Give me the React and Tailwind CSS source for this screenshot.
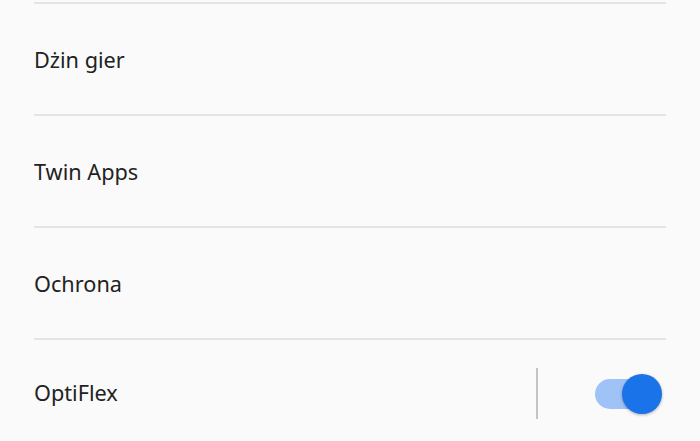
export default function App() {
  const rows = ["Dżin gier", "Twin Apps", "Ochrona"];
  return (
    <div className="w-[700px] h-[441px] overflow-hidden bg-[#fafafa] pt-[2px]" style={{ fontFamily: '"Noto Sans", "Open Sans", sans-serif' }}>
      {rows.map((r) => (
        <div key={r}>
          <div className="mx-[34px] h-[2px] bg-[#e4e4e4]" />
          <div className="h-[110px] flex items-center px-[34px] pt-[2px] text-[21.7px] text-[#222222]">{r}</div>
        </div>
      ))}
      <div className="mx-[34px] h-[2px] bg-[#e4e4e4]" />
      <div className="h-[106px] flex items-center pl-[34px] pr-[38px] pt-[1px] text-[21.7px] text-[#222222]">
        <span className="flex-1">OptiFlex</span>
        <div className="w-[2px] h-[51px] bg-[#c4c4c4] mr-[57px]" />
        <div className="relative w-[67px] h-[40px] flex items-center">
          <div className="w-[60px] h-[30px] rounded-full bg-[#9fc3f7]" />
          <div className="absolute right-0 top-0 w-[40px] h-[40px] rounded-full bg-[#1a73e8] shadow-[0_1px_3px_rgba(0,0,0,0.3)]" />
        </div>
      </div>
    </div>
  );
}
